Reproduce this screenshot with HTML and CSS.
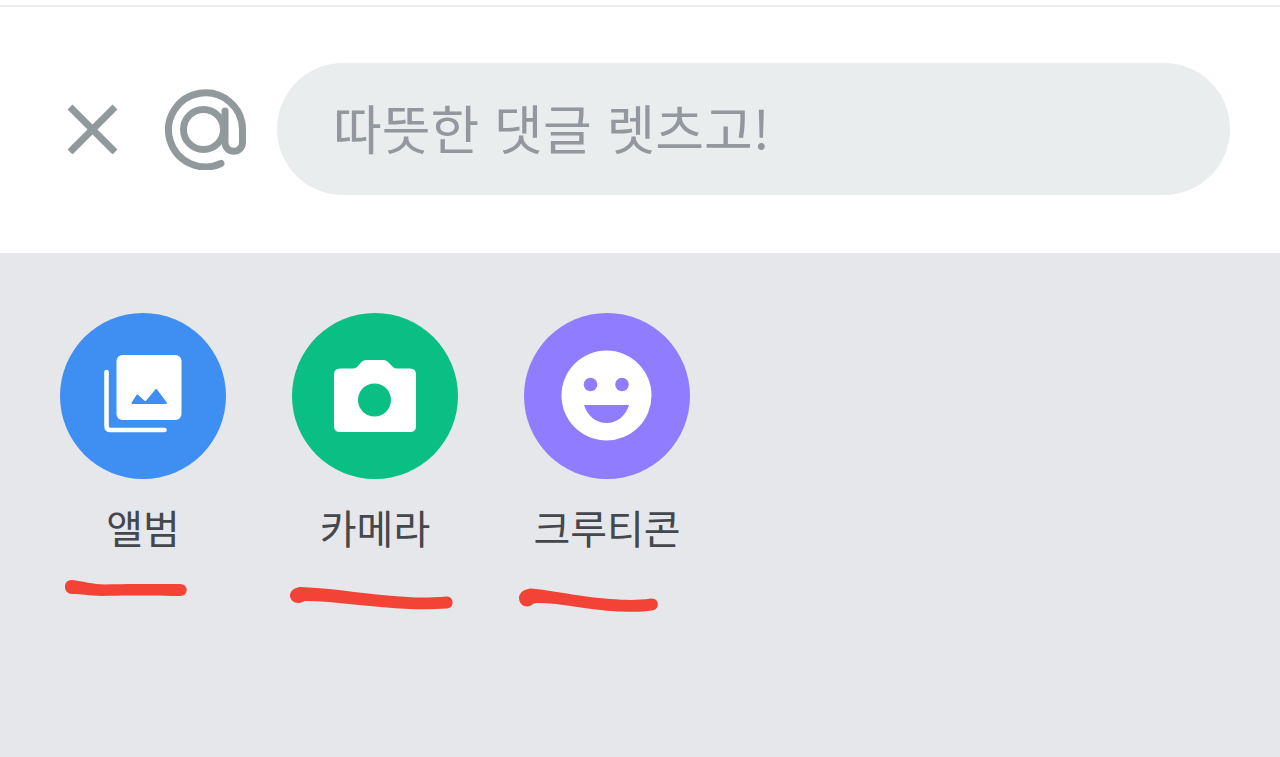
FILE: index.html
```html
<!DOCTYPE html>
<html lang="ko">
	<head>
		<meta charset="utf-8" />
		<title>댓글</title>
		<link rel="stylesheet" href="styles.css">
	</head>
	<body>
		<form class="comment">
			<button type="button" class="close" aria-label="닫기">
				<svg viewBox="0 0 50 50"><path d="M2 3L47 48M47 3L2 48"/></svg>
			</button>
			<button type="button" class="mention" aria-label="멘션">
				<svg viewBox="0 0 82 82">
					<path d="M56 75.5A37 37 0 1 1 77.5 41.5V54.5A8.75 8.75 0 0 1 60 54.5V23"/>
					<circle cx="38.5" cy="41.5" r="20"/>
				</svg>
			</button>
			<input type="text" class="text" placeholder="따뜻한 댓글 렛츠고!" aria-label="댓글 입력">
		</form>
		<div class="panel">
			<button type="button" class="item">
				<svg class="icon album" viewBox="0 0 166 166">
					<rect x="56.5" y="42" width="65" height="65" rx="6" fill="#fff"/>
					<path d="M46.5 59V113Q46.5 117 50.500 117H104.500" fill="none" stroke="#fff" stroke-width="4.6" stroke-linecap="round"/>
					<path d="M72.500 90L77.300 82.500L85.500 90L96.300 77L106 90Z" fill="#3f8ff3" stroke="#3f8ff3" stroke-width="2" stroke-linejoin="round"/>
				</svg>
				<span>앨범</span>
			</button>
			<button type="button" class="item">
				<svg class="icon camera" viewBox="0 0 166 166">
					<path d="M47 55.500H61Q63.500 55.500 65 54L70 48.500Q71.500 47 74 47H91.500Q94 47 95.500 48.500L101 54Q102.500 55.500 105 55.500H118Q124 55.500 124 61.500V113Q124 119 118 119H48Q42 119 42 113V61.500Q42 55.500 48 55.500Z" fill="#fff"/>
					<circle cx="82.500" cy="87" r="16.500" fill="#0abf84"/>
				</svg>
				<span>카메라</span>
			</button>
			<button type="button" class="item">
				<svg class="icon crewticon" viewBox="0 0 166 166">
					<circle cx="82.500" cy="82.500" r="45" fill="#fff"/>
					<circle cx="66.500" cy="71.500" r="6.800" fill="#8f7cff"/>
					<circle cx="98" cy="71.500" r="6.800" fill="#8f7cff"/>
					<path d="M60 92H105C101.500 103 93 110 82.500 110S63.500 103 60 92Z" fill="#8f7cff"/>
				</svg>
				<span>크루티콘</span>
			</button>
			<!-- 빨간 밑줄 -->
			<svg class="marks" viewBox="0 0 600 34" aria-hidden="true">
				<path d="M12 2C6 2 5 6 5 9C5 13 8 16 12 16C18 15.500 27 17.500 42 18C62 17 84 17.500 120 18C129 18 129 6 120 6C90 6 62 5.500 45 6.500C33 6.500 22 3 12 2Z"/>
				<path d="M240 9C233 10 230 14 230 17.500C230 22 234 25 238 25C242 25 243 23 246 23C275 23 310 29.500 350 31C366 31.500 376 31 387 30.500C395 30 394 18.500 387 18.500C372 19.500 360 20 348 19C308 17 275 10 240 9Z"/>
				<path d="M470 10.500C462 12 459 16 459 20C459 25 463 28.500 467 28.500C472 28.500 472 25 477 25C502 25 528 32 558 33.500C574 34 583 34 592 32.500C600 32 600 20 591 20.500C577 22.500 565 22 550 21C522 19 490 12 470 10.500Z"/>
			</svg>
		</div>
	</body>
</html>
```
FILE: styles.css
```css
*{
	margin: 0;
	padding: 0;
	box-sizing:border-box;
}
body{
	min-height: 100vh;
	padding-top: 5px;
	display: flex;
	flex-direction: column;
	background: #fff;
	font-family: "Noto Sans CJK KR", sans-serif;
}
button{
	border: 0;
	background: none;
	font-family: inherit;
	cursor: pointer;
}
svg{
	display: block;
}
.comment{
	display: flex;
	align-items: center;
	padding: 56px 50px 58px 68px;
	border-top: 2px solid #eee;
}
.comment svg{
	width: 100%;
	fill: none;
	stroke: #92999d;
	stroke-width: 7;
}
.close{
	flex: none;
	width: 50px;
	margin-right: 47px;
}
.mention{
	flex: none;
	width: 82px;
	margin-right: 30px;
}
.mention svg{
	stroke-linecap: round;
}
.text{
	flex: 1;
	min-width: 0;
	height: 132px;
	padding: 0 56px 4px;
	border: 0;
	border-radius: 66px;
	outline: none;
	background: #e9edee;
	color: #44474b;
	font-family: inherit;
	font-size: 53px;
}
.text::placeholder{
	color: #92989d;
	opacity: 1;
}
.panel{
	flex: 1;
	position: relative;
	display: flex;
	align-items: flex-start;
	gap: 66px;
	padding: 60px;
	background: #e5e7eb;
}
.item{
	width: 166px;
	color: #44474b;
	font-size: 40px;
	line-height: 48px;
}
.item span{
	display: block;
	margin-top: 24px;
	white-space: nowrap;
}
.icon{
	width: 166px;
	height: 166px;
	border-radius: 50%;
}
.album{
	background: #3f8ff3;
}
.camera{
	background: #0abf84;
}
.crewticon{
	background: #8f7cff;
}
.marks{
	position: absolute;
	left: 60px;
	top: 325px;
	width: 600px;
	height: 34px;
	fill: #f34336;
}
```
